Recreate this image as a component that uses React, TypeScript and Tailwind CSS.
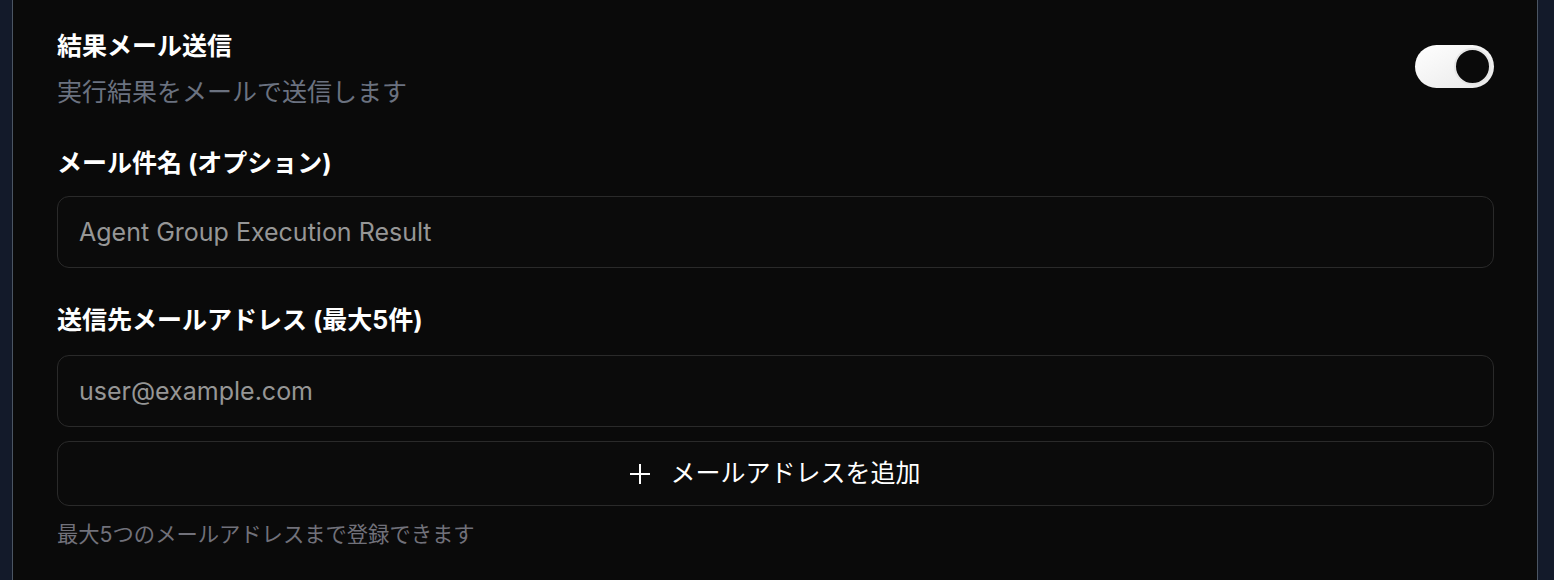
import React from "react";

function PlusIcon() {
  return (
    <svg width="20" height="20" viewBox="0 0 20 20" fill="none" stroke="currentColor" strokeWidth="2" strokeLinecap="square">
      <path d="M10 1v18M1 10h18" />
    </svg>
  );
}

export default function App() {
  const font = { fontFamily: '"Inter", "Noto Sans CJK JP", sans-serif' };
  return (
    <div className="flex h-[580px] w-full bg-[#131a2a] pl-[12px] pr-[16px]" style={font}>
      <div className="flex-1 border-x border-[#4b5563] bg-[#0a0a0a] pl-[44px] pr-[43px] pt-[30px]">
        <div className="flex items-start justify-between">
          <div className="flex flex-col">
            <div className="text-[25px] font-bold leading-[32px] text-white">結果メール送信</div>
            <div className="mt-[14px] text-[25px] leading-[32px] text-[#6b7280]">実行結果をメールで送信します</div>
          </div>
          <button className="mt-[15px] flex h-[43px] w-[79px] items-center justify-end rounded-full bg-gradient-to-br from-white to-[#e8e8e8] pr-[3px]">
            <span className="block h-[37px] w-[37px] rounded-full border-2 border-[#e5e5e5] bg-[#0a0a0a]" />
          </button>
        </div>

        <div className="mt-[39px] text-[25px] font-bold leading-[32px] text-white">メール件名 (オプション)</div>
        <input
          className="mt-[17px] block h-[72px] w-full rounded-[12px] border border-[#2a2a2a] bg-[#0b0b0b] px-[21px] text-[25px] text-white outline-none placeholder:text-[#969696]"
          placeholder="Agent Group Execution Result"
        />

        <div className="mt-[36px] text-[25px] font-bold leading-[32px] text-white">送信先メールアドレス (最大5件)</div>
        <input
          className="mt-[19px] block h-[72px] w-full rounded-[12px] border border-[#2a2a2a] bg-[#0b0b0b] px-[21px] text-[25px] text-white outline-none placeholder:text-[#969696]"
          placeholder="user@example.com"
        />
        <button className="mt-[14px] flex h-[65px] w-full items-center justify-center gap-[20px] rounded-[12px] border border-[#2a2a2a] bg-[#0b0b0b] text-[25px] text-white">
          <PlusIcon />
          <span>メールアドレスを追加</span>
        </button>
        <div className="mt-[14px] text-[21.3px] leading-[28px] text-[#71717a]">最大5つのメールアドレスまで登録できます</div>
      </div>
    </div>
  );
}
